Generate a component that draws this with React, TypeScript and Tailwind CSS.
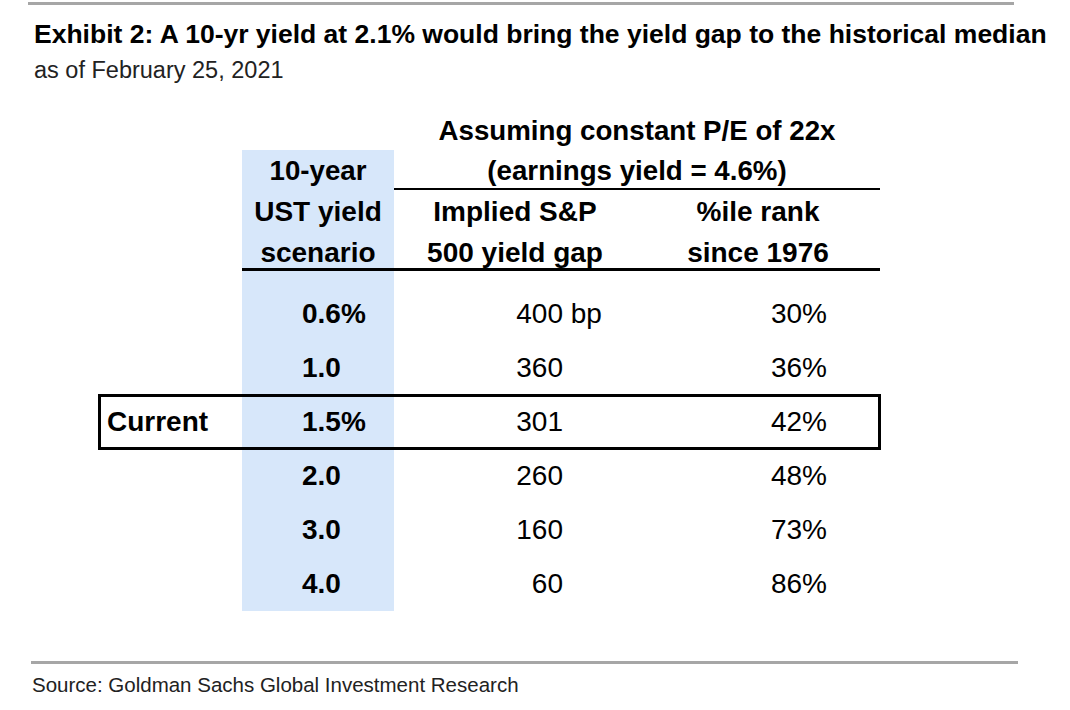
const rows = [
  { ust: "0.6%", gap: "400", unit: " bp", rank: "30%" },
  { ust: "1.0", gap: "360", rank: "36%" },
  { ust: "1.5%", gap: "301", rank: "42%", current: true },
  { ust: "2.0", gap: "260", rank: "48%" },
  { ust: "3.0", gap: "160", rank: "73%" },
  { ust: "4.0", gap: "60", rank: "86%" },
];

const cols = "grid grid-cols-[143px_152px_242px_244px] w-[781px]";
const blue = "bg-[#d7e7fa]";

export default function App() {
  return (
    <div className="w-[1070px] h-[710px] bg-white overflow-hidden text-black font-['Liberation_Sans',Arial,sans-serif]">
      <div className="ml-[28px] mt-[2px] h-[3px] w-[986px] bg-[#a6a6a6]" />
      <h1 className="ml-[34px] mt-[15px] text-[26.5px] leading-[28px] font-bold whitespace-nowrap">
        Exhibit 2: A 10-yr yield at 2.1% would bring the yield gap to the historical median
      </h1>
      <p className="ml-[34px] mt-[9px] text-[23.5px] leading-[26px] text-[#222]">as of February 25, 2021</p>

      {/* table */}
      <div className="ml-[99px] mt-[29px] text-[28px]">
        {/* header */}
        <div className={`${cols} h-[38px] font-bold text-[27.7px]`}>
          <div />
          <div />
          <div className="col-span-2 text-center leading-[38px]">Assuming constant P/E of 22x</div>
        </div>
        <div className={`${cols} h-[38px] font-bold text-[27.7px]`}>
          <div />
          <div className={`${blue} text-center pt-1 leading-[34px]`}>10-year</div>
          <div className="col-span-2 text-center pt-1 leading-[34px]">(earnings yield = 4.6%)</div>
        </div>
        <div className={`${cols} h-[2px]`}>
          <div />
          <div className={blue} />
          <div className="col-span-2 bg-black" />
        </div>
        <div className={`${cols} h-[42px] font-bold`}>
          <div />
          <div className={`${blue} text-center pt-[2px] leading-[40px]`}>UST yield</div>
          <div className="text-center pt-[2px] leading-[40px]">Implied S&amp;P</div>
          <div className="text-center pt-[2px] leading-[40px]">%ile rank</div>
        </div>
        <div className={`${cols} h-[36px] font-bold`}>
          <div />
          <div className={`${blue} text-center pt-[6px] leading-[30px]`}>scenario</div>
          <div className="text-center pt-[6px] leading-[30px]">500 yield gap</div>
          <div className="text-center pt-[6px] leading-[30px]">since 1976</div>
        </div>
        <div className={`${cols} h-[3px]`}>
          <div />
          <div className="col-span-3 bg-black" />
        </div>
        <div className={`${cols} h-[16px]`}>
          <div />
          <div className={blue} />
        </div>

        {/* body */}
        {rows.map((r) => (
          <div
            key={r.ust}
            className={`${cols} h-[54px] ${r.current ? "outline-3 outline-black -outline-offset-2" : ""}`}
          >
            <div className="flex items-center pl-[8px] font-bold">{r.current ? "Current" : ""}</div>
            <div className={`${blue} flex items-center pl-[60px] font-bold`}>{r.ust}</div>
            <div className="flex items-center whitespace-pre">
              <span className="inline-block w-[169px] text-right">{r.gap}</span>
              {r.unit ?? ""}
            </div>
            <div className="flex items-center">
              <span className="inline-block w-[191px] text-right">{r.rank}</span>
            </div>
          </div>
        ))}
      </div>

      <div className="ml-[31px] mt-[50px] h-[3px] w-[987px] bg-[#a6a6a6]" />
      <p className="ml-[32px] mt-[9px] text-[20.5px] leading-[24px] text-[#222]">
        Source: Goldman Sachs Global Investment Research
      </p>
    </div>
  );
}
